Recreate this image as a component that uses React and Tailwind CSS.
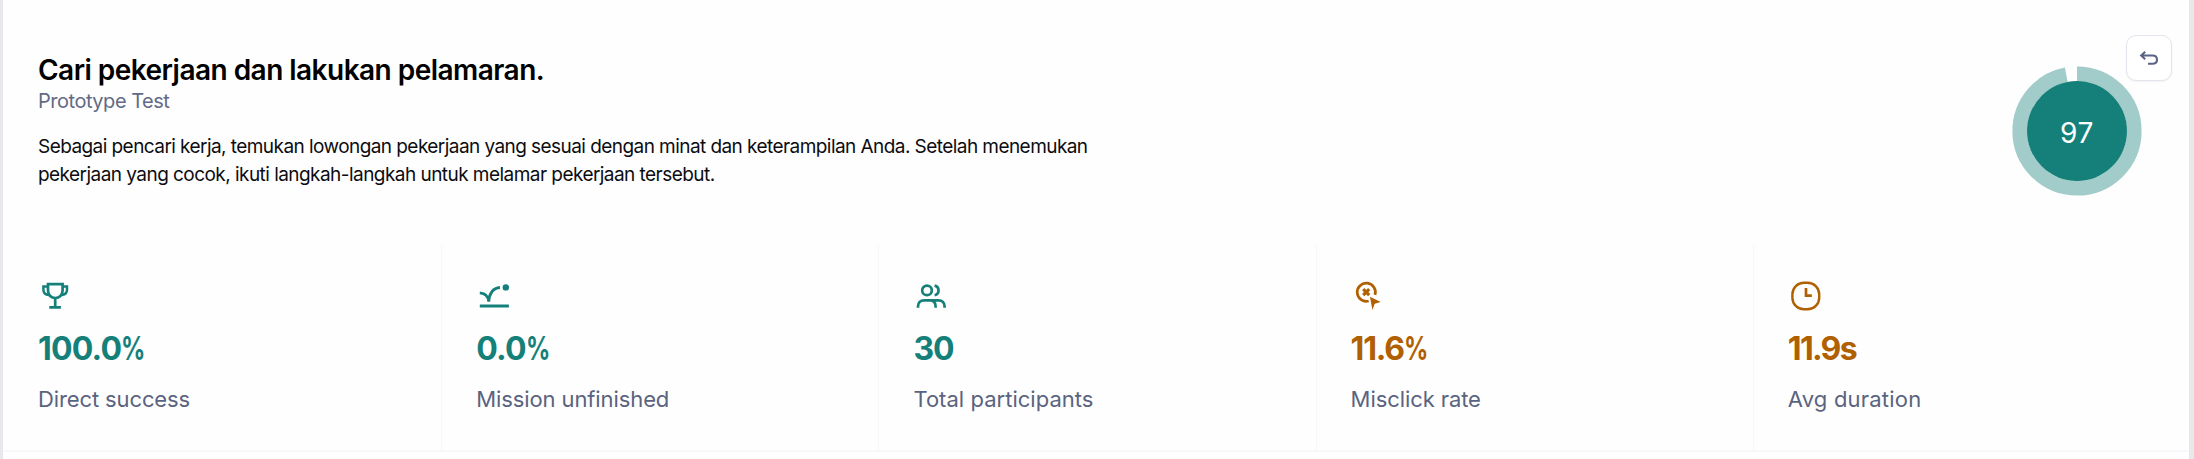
import React from "react";

function Icon({ children }) {
  return (
    <svg width="34" height="32" viewBox="0 0 34 32" fill="none" stroke="currentColor" strokeWidth="2.7" className="block overflow-visible">
      {children}
    </svg>
  );
}

const TrophyIcon = () => (
  <Icon>
    <path d="M10 4.2H24.6V10.5C24.6 15 21.3 18 17.3 18S10 15 10 10.5Z" />
    <path d="M10 6.4H5.4V9.8C5.4 12.8 7.6 14.8 11 14.9M24.6 6.4H29V9.8C29 12.8 26.9 14.8 23.4 14.9" strokeWidth="2.5" />
    <path d="M17.2 18V27M11.3 27.4H22.9" />
  </Icon>
);

const BounceIcon = () => (
  <Icon>
    <path d="M3.8 26H32.9" strokeWidth="3" />
    <path d="M3.8 12.9C9 13.3 12.5 16.5 12.7 21.8C12.9 13.8 17 7.9 24 7.5" strokeWidth="2.9" />
    <circle cx="29.8" cy="7.4" r="3.2" fill="currentColor" stroke="none" />
  </Icon>
);

const UsersIcon = () => (
  <Icon>
    <circle cx="14" cy="10.4" r="4.8" />
    <path d="M21.6 5.6A4.9 4.9 0 0 1 21.6 15.2" />
    <path d="M5 27.8V26.5C5 22.7 7.3 20.3 11 20.3H25.5C29.2 20.3 31.6 22.7 31.6 26.5V27.8M17 20.3C20.5 20.3 22.6 22.7 22.6 26.5V27.8" />
  </Icon>
);

const MisclickIcon = () => (
  <Icon>
    <path d="M17.7 21A9.1 9.1 0 1 1 24 14.9" />
    <path d="M12.2 9.2L18.2 15.2M18.2 9.2L12.2 15.2" strokeWidth="3.2" />
    <path d="M19 16.8L29.7 21.9L23.7 23.8L21.4 30Z" fill="currentColor" stroke="none" />
  </Icon>
);

const ClockIcon = () => (
  <Icon>
    <rect x="4.4" y="2.7" width="26.8" height="26.6" rx="11.6" strokeWidth="2.4" />
    <path d="M18 8V15.7H23.8" strokeWidth="2.7" />
  </Icon>
);

const Percent = () => (
  <span className="inline-block w-[24px] origin-left scale-x-[0.75] font-bold tracking-normal">%</span>
);

const stats = [
  { icon: <TrophyIcon />, value: "100.0", percent: true, label: "Direct success", tone: "text-[#15807a]", valueClass: "tracking-[-0.8px]", labelClass: "tracking-[-0.12px]" },
  { icon: <BounceIcon />, value: "0.0", percent: true, label: "Mission unfinished", tone: "text-[#15807a]", valueClass: "tracking-[-0.8px]", labelClass: "tracking-[-0.1px]" },
  { icon: <UsersIcon />, value: "30", label: "Total participants", tone: "text-[#15807a]", valueClass: "tracking-[-1px]", labelClass: "tracking-[0.03px]" },
  { icon: <MisclickIcon />, value: "11.6", percent: true, label: "Misclick rate", tone: "text-[#b06000]", valueClass: "tracking-[-1.2px]", labelClass: "tracking-[-0.08px]" },
  { icon: <ClockIcon />, value: "11.9s", label: "Avg duration", tone: "text-[#b06000]", valueClass: "tracking-[-1.7px]", labelClass: "tracking-[0.2px]" },
];

function Stat({ icon, value, percent, label, tone, valueClass, labelClass, first }) {
  return (
    <div className={`pt-9 ${first ? "pl-[35px]" : "ml-px border-l border-[#f7f7f9] pl-[34px]"}`}>
      <div className={tone}>
        {icon}
        <div className={`mt-[17px] text-[32px] leading-10 font-bold whitespace-nowrap ${valueClass}`}>
          {value}
          {percent && <Percent />}
        </div>
      </div>
      <div className={`mt-4 text-[22px] leading-7 whitespace-nowrap text-[#5a637f] ${labelClass}`}>{label}</div>
    </div>
  );
}

function ScoreRing() {
  return (
    <div className="grid size-[130px] place-items-center">
      <svg width="130" height="130" viewBox="0 0 130 130" className="col-start-1 row-start-1">
        <circle cx="65" cy="65" r="57.2" fill="none" stroke="#a2ccc9" strokeWidth="14.8" pathLength="100" strokeDasharray="97 3" transform="rotate(-90 65 65)" />
        <circle cx="65" cy="65" r="50" fill="#15807a" />
      </svg>
      <span className="col-start-1 row-start-1 pt-[3px] text-[28px] leading-8 tracking-[0.6px] text-white">97</span>
    </div>
  );
}

export default function App() {
  return (
    <div className="h-[459px] w-[2194px] overflow-hidden border-r-[5px] border-l-[3px] border-[#e7e7ec] bg-[#fefefe] font-['Inter',sans-serif]">
      <header className="relative flex h-[244px] justify-between pl-[35px]">
        <div className="pt-[53px]">
          <h1 className="text-[28px] leading-[34px] font-semibold tracking-[-0.53px] whitespace-nowrap text-black">Cari pekerjaan dan lakukan pelamaran.</h1>
          <p className="mt-[2px] text-[20px] leading-6 tracking-[-0.48px] text-[#626a85]">Prototype Test</p>
          <p className="mt-[20px] text-[19px] leading-[27.5px] tracking-[-0.56px] whitespace-nowrap text-[#0c0c10]">
            Sebagai pencari kerja, temukan lowongan pekerjaan yang sesuai dengan minat dan keterampilan Anda. Setelah menemukan
            <br />
            <span className="tracking-[-0.545px]">pekerjaan yang cocok, ikuti langkah-langkah untuk melamar pekerjaan tersebut.</span>
          </p>
        </div>
        <div className="pt-[66px] pr-[47px]">
          <ScoreRing />
        </div>
        <button aria-label="Undo" className="absolute top-[35px] right-[17px] flex size-[46px] items-center justify-center rounded-[10px] border border-[#e3e4ec] bg-white text-[#5b6483] shadow-xs">
          <svg width="20" height="16" viewBox="0 0 20 16" fill="none" stroke="currentColor" strokeWidth="2.1" className="block">
            <path d="M6.2 1.7L2.2 5.5L6.2 9.3M2.4 5.5H13.5C16.4 5.5 18 7.2 18 9.7S16.4 13.7 13.5 13.7H9" />
          </svg>
        </button>
      </header>
      <section className="grid h-[208px] grid-cols-5 border-b-2 border-[#f8f8fa]">
        {stats.map((s, i) => (
          <Stat key={s.label} {...s} first={i === 0} />
        ))}
      </section>
    </div>
  );
}
